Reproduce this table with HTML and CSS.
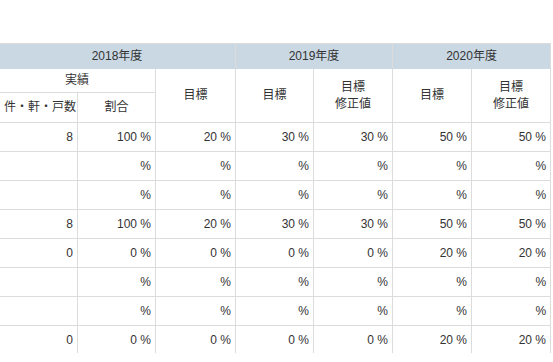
FILE: index.html
```html
<!DOCTYPE html>
<html lang="ja">
<head>
<meta charset="utf-8">
<title>目標</title>
<link rel="stylesheet" href="styles.css">
</head>
<body>
<div class="viewport">
  <table class="grid">
    <colgroup>
      <col class="c1"><col class="c2"><col class="c3"><col class="c4"><col class="c5"><col class="c6"><col class="c7">
    </colgroup>
    <thead>
      <tr class="year-row">
        <th colspan="3">2018年度</th>
        <th colspan="2">2019年度</th>
        <th colspan="2">2020年度</th>
      </tr>
      <tr class="sub-row">
        <th colspan="2">実績</th>
        <th rowspan="2">目標</th>
        <th rowspan="2">目標</th>
        <th rowspan="2">目標<br>修正値</th>
        <th rowspan="2">目標</th>
        <th rowspan="2">目標<br>修正値</th>
      </tr>
      <tr class="sub-row2">
        <th>件・軒・戸数</th>
        <th>割合</th>
      </tr>
    </thead>
    <tbody>
      <tr><td>8</td><td>100 %</td><td>20 %</td><td>30 %</td><td>30 %</td><td>50 %</td><td>50 %</td></tr>
      <tr><td></td><td>%</td><td>%</td><td>%</td><td>%</td><td>%</td><td>%</td></tr>
      <tr><td></td><td>%</td><td>%</td><td>%</td><td>%</td><td>%</td><td>%</td></tr>
      <tr><td>8</td><td>100 %</td><td>20 %</td><td>30 %</td><td>30 %</td><td>50 %</td><td>50 %</td></tr>
      <tr><td>0</td><td>0 %</td><td>0 %</td><td>0 %</td><td>0 %</td><td>20 %</td><td>20 %</td></tr>
      <tr><td></td><td>%</td><td>%</td><td>%</td><td>%</td><td>%</td><td>%</td></tr>
      <tr><td></td><td>%</td><td>%</td><td>%</td><td>%</td><td>%</td><td>%</td></tr>
      <tr><td>0</td><td>0 %</td><td>0 %</td><td>0 %</td><td>0 %</td><td>20 %</td><td>20 %</td></tr>
    </tbody>
  </table>
</div>
</body>
</html>
```
FILE: styles.css
```css
html, body {
  margin: 0;
  padding: 0;
  background: #fff;
}
.viewport {
  height: 353px;
  overflow: hidden;
  padding-top: 43px;
  box-sizing: border-box;
}
.grid {
  margin-left: -2px;
  border-collapse: collapse;
  table-layout: fixed;
  width: 553px;
  font-family: "Liberation Sans", "Noto Sans CJK JP", sans-serif;
  font-size: 12px;
  color: #333;
}
.c1 { width: 79px; }
.c2 { width: 78px; }
.c3 { width: 80px; }
.c4 { width: 78px; }
.c5 { width: 79px; }
.c6 { width: 79px; }
.c7 { width: 79px; }
.grid th,
.grid td {
  border: 1px solid #dcdcdc;
  padding: 0 5px;
  line-height: 17px;
  overflow: hidden;
  white-space: nowrap;
}
.grid th {
  font-weight: normal;
  text-align: center;
  vertical-align: middle;
}
.year-row th {
  background: #c9d8e3;
  height: 24px;
  border-bottom-color: #c9d8e3;
}
.sub-row th {
  height: 23px;
}
.sub-row2 th {
  height: 29px;
}
.grid td {
  text-align: right;
  height: 28px;
  padding-right: 4px;
}
```
